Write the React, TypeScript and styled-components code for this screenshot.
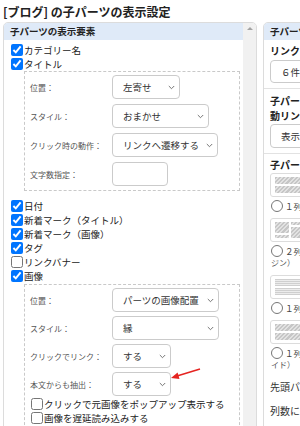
import React from 'react';
import styled, { createGlobalStyle, css } from 'styled-components';

const Global = createGlobalStyle`
  html, body { margin: 0; padding: 0; background: #fff; overflow: hidden; }
  body { font-family: "Noto Sans CJK JP", "Noto Sans", sans-serif; color: #333; }
  * { box-sizing: border-box; }
`;

const Page = styled.div`
  width: 300px;
  height: 426px;
  overflow: hidden;
  padding: 3px 0 0 3px;
`;

const Title = styled.h1`
  margin: 0;
  font-size: 12px;
  line-height: 18px;
  font-weight: 700;
  color: #222;
  white-space: nowrap;
`;

const Columns = styled.div`
  display: flex;
  gap: 6px;
  align-items: flex-start;
  margin-top: 1px;
`;

const LeftPanel = styled.section`
  flex: 0 0 254px;
  height: 420px;
  display: flex;
  border: 1px solid #dcdcdc;
  border-radius: 5px;
  overflow: hidden;
`;

const LeftMain = styled.div`
  flex: 1;
  min-width: 0;
  display: flex;
  flex-direction: column;
`;

const ScrollTrack = styled.div`
  flex: 0 0 13px;
  background: #f1f1f1;
  display: flex;
  justify-content: center;
  padding-top: 4px;
`;

const ArrowUp = styled.div`
  width: 0;
  height: 0;
  border-left: 3px solid transparent;
  border-right: 3px solid transparent;
  border-bottom: 3px solid #a3a3a3;
`;

const PanelHeader = styled.div`
  height: 17px;
  line-height: 17px;
  background: #dfeaf8;
  font-size: 9.5px;
  font-weight: 700;
  color: #222;
  padding-left: 6px;
  white-space: nowrap;
`;

const LeftBody = styled.div`
  padding: 3px 3px 0 7px;
`;

const CheckRow = styled.label`
  display: flex;
  align-items: center;
  height: 14px;
  font-size: 9.5px;
  color: #222;
  white-space: nowrap;
`;

const Check = styled.input.attrs({ type: 'checkbox' })<{ $inset?: boolean }>`
  width: 12px;
  height: 12px;
  flex-shrink: 0;
  margin: 0 1px 0 ${(p) => (p.$inset ? '1px' : '0')};
`;

const DashedBox = styled.div<{ $mb?: number; $mt?: number }>`
  margin: ${(p) => p.$mt ?? 0}px 0 ${(p) => p.$mb ?? 0}px 13px;
  border: 1px dashed #c9c9c9;
  padding: 3px 5px 4px 5px;
`;

const FieldList = styled.div<{ $gap: number }>`
  display: flex;
  flex-direction: column;
  gap: ${(p) => p.$gap}px;
`;

const FieldRow = styled.div`
  position: relative;
  display: grid;
  grid-template-columns: 82px auto;
  align-items: center;
  height: 24px;
`;

const FieldLabel = styled.span`
  font-size: 8px;
  color: #555;
  white-space: nowrap;
`;

const SelectBox = styled.div<{ $w: number; $h?: number }>`
  width: ${(p) => p.$w}px;
  height: ${(p) => p.$h ?? 24}px;
  border: 1px solid #cbcbcb;
  border-radius: 4px;
  background: #fff;
  display: flex;
  align-items: center;
  gap: 2px;
  padding: 0 4px 0 10px;
  font-size: 9.5px;
  color: #333;
  white-space: nowrap;
  overflow: hidden;
`;

const SelectText = styled.span`
  flex: 1;
  min-width: 0;
  overflow: hidden;
`;

const ChevronSvg = styled.svg`
  flex-shrink: 0;
`;

const TextInput = styled.div<{ $w: number }>`
  width: ${(p) => p.$w}px;
  height: 24px;
  border: 1px solid #cbcbcb;
  border-radius: 4px;
  background: #fff;
`;

const CheckGroup = styled.div`
  margin-top: 1px;
`;

const ArrowMark = styled.svg`
  position: absolute;
  left: 135px;
  top: -8px;
  overflow: visible;
`;

const Chevron = () => (
  <ChevronSvg width="7" height="5" viewBox="0 0 7 5">
    <path d="M0.8 1 L3.5 3.7 L6.2 1" fill="none" stroke="#666" strokeWidth="0.9" />
  </ChevronSvg>
);

const Select: React.FC<{ w: number; h?: number; children?: React.ReactNode }> = ({ w, h, children }) => (
  <SelectBox $w={w} $h={h}>
    <SelectText>{children}</SelectText>
    <Chevron />
  </SelectBox>
);

/* right panel */

const RightPanel = styled.section`
  flex: 0 0 200px;
  height: 420px;
  border: 1px solid #dcdcdc;
  border-radius: 5px;
  overflow: hidden;
`;

const Section = styled.div<{ $last?: boolean }>`
  padding: 4px 5px 5px 6px;
  ${(p) =>
    !p.$last &&
    css`
      border-bottom: 1px solid #e2e2e2;
    `}
`;

const SectionLabel = styled.div<{ $lh?: number }>`
  font-size: 10px;
  font-weight: 700;
  line-height: ${(p) => p.$lh ?? 14}px;
  color: #222;
  white-space: nowrap;
`;

const RightSelectWrap = styled.div<{ $mt: number }>`
  margin-top: ${(p) => p.$mt}px;
`;

const Option = styled.div`
  margin-bottom: 6px;
`;

const Preview = styled.div<{ $cols?: boolean }>`
  width: 110px;
  height: 24px;
  border: 1px solid #dcdcdc;
  border-radius: 3px;
  padding: 3px 4px;
  display: flex;
  flex-direction: ${(p) => (p.$cols ? 'row' : 'column')};
  gap: 2px;
  margin-top: 1px;
`;

const diag = css`
  background: repeating-linear-gradient(135deg, #c6c6c6 0 1.5px, #e2e2e2 1.5px 3px);
`;
const horiz = css`
  background: repeating-linear-gradient(180deg, #cfcfcf 0 1px, #ececec 1px 2px);
`;

const Bar = styled.div<{ $h: number; $kind?: 'diag' | 'horiz'; $w?: number }>`
  height: ${(p) => p.$h}px;
  ${(p) => (p.$w ? `width: ${p.$w}px;` : '')}
  flex-shrink: 0;
  ${(p) => (p.$kind === 'horiz' ? horiz : diag)}
`;

const PreviewCol = styled.div<{ $w?: number }>`
  display: flex;
  flex-direction: column;
  gap: 2px;
  ${(p) => (p.$w ? `width: ${p.$w}px;` : 'flex: 1;')}
`;

const RadioRow = styled.label`
  display: flex;
  align-items: center;
  height: 12px;
  margin-top: 3px;
  font-size: 8.5px;
  color: #444;
  white-space: nowrap;
`;

const Radio = styled.input.attrs({ type: 'radio', name: 'layout' })`
  width: 12px;
  height: 12px;
  flex-shrink: 0;
  margin: 0 2px 0 1px;
`;

const WrapLine = styled.div`
  height: 12px;
  line-height: 12px;
  font-size: 8px;
  color: #555;
  padding-left: 1px;
`;

const PlainLine = styled.div<{ $mt: number }>`
  margin-top: ${(p) => p.$mt}px;
  font-size: 10px;
  line-height: 14px;
  color: #333;
  white-space: nowrap;
`;

export default function App() {
  return (
    <>
      <Global />
      <Page>
        <Title>[ブログ] の子パーツの表示設定</Title>
        <Columns>
          <LeftPanel>
            <LeftMain>
              <PanelHeader>子パーツの表示要素</PanelHeader>
              <LeftBody>
                <CheckRow>
                  <Check defaultChecked />
                  カテゴリー名
                </CheckRow>
                <CheckRow>
                  <Check defaultChecked />
                  タイトル
                </CheckRow>
                <DashedBox $mb={8}>
                  <FieldList $gap={5}>
                    <FieldRow>
                      <FieldLabel>位置：</FieldLabel>
                      <Select w={68}>左寄せ</Select>
                    </FieldRow>
                    <FieldRow>
                      <FieldLabel>スタイル：</FieldLabel>
                      <Select w={97}>おまかせ</Select>
                    </FieldRow>
                    <FieldRow>
                      <FieldLabel>クリック時の動作：</FieldLabel>
                      <Select w={106}>リンクへ遷移する</Select>
                    </FieldRow>
                    <FieldRow>
                      <FieldLabel>文字数指定：</FieldLabel>
                      <TextInput $w={56} />
                    </FieldRow>
                  </FieldList>
                </DashedBox>
                <CheckRow>
                  <Check defaultChecked />
                  日付
                </CheckRow>
                <CheckRow>
                  <Check defaultChecked />
                  新着マーク（タイトル）
                </CheckRow>
                <CheckRow>
                  <Check defaultChecked />
                  新着マーク（画像）
                </CheckRow>
                <CheckRow>
                  <Check defaultChecked />
                  タグ
                </CheckRow>
                <CheckRow>
                  <Check />
                  リンクバナー
                </CheckRow>
                <CheckRow>
                  <Check defaultChecked />
                  画像
                </CheckRow>
                <DashedBox $mt={1}>
                  <FieldList $gap={4}>
                    <FieldRow>
                      <FieldLabel>位置：</FieldLabel>
                      <Select w={107}>パーツの画像配置</Select>
                    </FieldRow>
                    <FieldRow>
                      <FieldLabel>スタイル：</FieldLabel>
                      <Select w={107}>縁</Select>
                    </FieldRow>
                    <FieldRow>
                      <FieldLabel>クリックでリンク：</FieldLabel>
                      <Select w={59}>する</Select>
                    </FieldRow>
                    <FieldRow>
                      <FieldLabel>本文からも抽出：</FieldLabel>
                      <Select w={59}>する</Select>
                      <ArrowMark width="40" height="20" viewBox="0 0 40 20">
                        <line x1="35" y1="5" x2="12" y2="12" stroke="#e52421" strokeWidth="1.6" />
                        <polygon points="6,14 14.5,15 12.6,8.4" fill="#e52421" />
                      </ArrowMark>
                    </FieldRow>
                  </FieldList>
                  <CheckGroup>
                    <CheckRow>
                      <Check $inset />
                      クリックで元画像をポップアップ表示する
                    </CheckRow>
                    <CheckRow>
                      <Check $inset />
                      画像を遅延読み込みする
                    </CheckRow>
                  </CheckGroup>
                </DashedBox>
              </LeftBody>
            </LeftMain>
            <ScrollTrack>
              <ArrowUp />
            </ScrollTrack>
          </LeftPanel>

          <RightPanel>
            <PanelHeader>子パーツの表示設定</PanelHeader>
            <Section>
              <SectionLabel>リンクの表示件数</SectionLabel>
              <RightSelectWrap $mt={2}>
                <Select w={120} h={23}>６件</Select>
              </RightSelectWrap>
            </Section>
            <Section>
              <SectionLabel $lh={15}>
                子パーツに親パーツへの自
                <br />
                動リンクを表示する
              </SectionLabel>
              <RightSelectWrap $mt={1}>
                <Select w={120}>表示しない</Select>
              </RightSelectWrap>
            </Section>
            <Section $last>
              <SectionLabel>子パーツのレイアウト</SectionLabel>
              <Option>
                <Preview>
                  <Bar $h={7} />
                  <Bar $h={7} />
                </Preview>
                <RadioRow>
                  <Radio />
                  １列（サムネイル）
                </RadioRow>
              </Option>
              <Option>
                <Preview $cols>
                  <PreviewCol $w={14}>
                    <Bar $h={11} />
                    <Bar $h={3} />
                  </PreviewCol>
                  <PreviewCol $w={14}>
                    <Bar $h={3} />
                    <Bar $h={11} />
                  </PreviewCol>
                  <PreviewCol>
                    <Bar $h={3} />
                    <Bar $h={11} />
                  </PreviewCol>
                </Preview>
                <RadioRow>
                  <Radio />
                  ２列（サムネイル＋マー
                </RadioRow>
                <WrapLine>ジン）</WrapLine>
              </Option>
              <Option>
                <Preview>
                  <Bar $h={7} $kind="horiz" />
                  <Bar $h={7} $kind="horiz" />
                </Preview>
                <RadioRow>
                  <Radio />
                  １列（テキストのみ）
                </RadioRow>
              </Option>
              <Option>
                <Preview>
                  <Bar $h={7} />
                  <Bar $h={7} />
                </Preview>
                <RadioRow>
                  <Radio />
                  １列（サムネイル付きスラ
                </RadioRow>
                <WrapLine>イド）</WrapLine>
              </Option>
              <PlainLine $mt={9}>先頭パーツの表示</PlainLine>
              <PlainLine $mt={10}>列数に満たない場合</PlainLine>
            </Section>
          </RightPanel>
        </Columns>
      </Page>
    </>
  );
}
